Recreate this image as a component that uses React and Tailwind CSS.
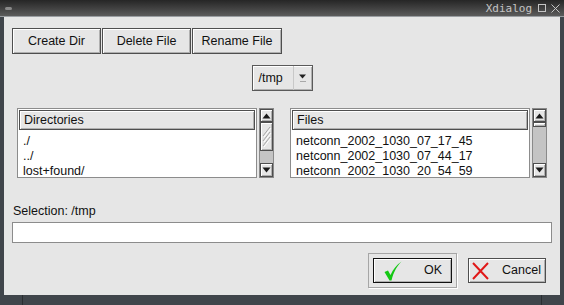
import React from "react";

const raised =
  "border border-[#4e4e4e] bg-[#e6e6e6] shadow-[inset_1px_1px_0_#ffffff,inset_-1px_-1px_0_#b0b0b0]";

function ArrowUp() {
  return (
    <svg width="9" height="6" viewBox="0 0 9 6">
      <path d="M4.5 0.5 L8.5 5.5 L0.5 5.5 Z" fill="#1a1a1a" />
    </svg>
  );
}
function ArrowDown() {
  return (
    <svg width="9" height="6" viewBox="0 0 9 6">
      <path d="M0.5 0.5 L8.5 0.5 L4.5 5.5 Z" fill="#1a1a1a" />
    </svg>
  );
}

function Scrollbar({ thumb, hatched }) {
  return (
    <div className="flex flex-col w-[15px] h-[70px] bg-[#c4c4c4] border border-[#8a8a8a]">
      <div className={`${raised} h-[13px] flex items-center justify-center`}>
        <ArrowUp />
      </div>
      <div
        className={`${raised} flex items-center justify-center overflow-hidden`}
        style={{ height: thumb }}
      >
        {hatched && (
          <svg width="11" height="26" viewBox="0 0 11 26">
            <path d="M9 3 L2 12 M9 8 L2 17 M9 13 L2 22" stroke="#a8a8a8" strokeWidth="1" />
            <path d="M10 4 L3 13 M10 9 L3 18 M10 14 L3 23" stroke="#ffffff" strokeWidth="1" />
          </svg>
        )}
      </div>
      <div className="flex-1" />
      <div className={`${raised} h-[14px] flex items-center justify-center`}>
        <ArrowDown />
      </div>
    </div>
  );
}

function ListBox({ title, items }) {
  return (
    <div className="w-[240px] h-[70px] bg-white border border-[#8c8c8c] overflow-hidden p-[1px]">
      <div className={`${raised} h-[20px] flex items-center pl-[4px]`}>{title}</div>
      <div className="pt-[4px] pl-[4px]">
        {items.map((t) => (
          <div key={t} className="h-[15px] leading-[15px] whitespace-nowrap">
            {t}
          </div>
        ))}
      </div>
    </div>
  );
}

export default function App() {
  return (
    <div
      className="w-[564px] h-[305px] bg-[#40454b] flex flex-col text-[12.5px] text-[#111]"
      style={{ fontFamily: '"Liberation Sans", Arial, sans-serif' }}
    >
      {/* title bar */}
      <div className="h-[16px] bg-gradient-to-b from-[#262626] to-[#5c5c5c] flex items-center relative">
        <div className="ml-[5px] w-[7px] h-[3px] rounded-sm bg-[#8a8a8a]" />
        <div className="flex-1" />
        <span
          className="text-[11px] text-[#c4c4c4] leading-none"
          style={{ fontFamily: '"DejaVu Sans Mono", monospace' }}
        >
          Xdialog
        </span>
        <div className="ml-[6px] w-[8px] h-[8px] border border-[#c4c4c4]" />
        <svg className="ml-[5px] mr-[4px]" width="9" height="9" viewBox="0 0 9 9">
          <path d="M0.5 0.5 L8.5 8.5 M8.5 0.5 L0.5 8.5" stroke="#c4c4c4" strokeWidth="1" />
        </svg>
      </div>
      <div className="h-[1px] bg-[#9a9ea2]" />

      {/* content */}
      <div className="mx-[4px] h-[278px] bg-[#e6e6e6] flex flex-col">
        {/* top buttons */}
        <div className="flex pt-[11px] pl-[8px] gap-[1px]">
          <div className={`${raised} w-[89px] h-[26px] flex items-center justify-center`}>Create Dir</div>
          <div className={`${raised} w-[89px] h-[26px] flex items-center justify-center`}>Delete File</div>
          <div className={`${raised} w-[90px] h-[26px] flex items-center justify-center`}>Rename File</div>
        </div>

        {/* dropdown */}
        <div className="flex justify-center mt-[11px]">
          <div className="flex h-[26px] border border-[#5a5a5a] bg-[#e6e6e6] shadow-[inset_1px_1px_0_#ffffff,inset_-1px_-1px_0_#b0b0b0]">
            <div className="w-[41px] flex items-center pl-[6px] border-r border-[#c8c8c8]">/tmp</div>
            <div className="w-[18px] flex flex-col items-center justify-center gap-[2px]">
              <svg width="7" height="5" viewBox="0 0 7 5">
                <path d="M0 0.5 L7 0.5 L3.5 4.5 Z" fill="#222" />
              </svg>
              <div className="w-[6px] h-[1px] bg-[#a8a8a8]" />
            </div>
          </div>
        </div>

        {/* lists */}
        <div className="flex mt-[17px] pl-[13px]">
          <ListBox title="Directories" items={["./", "../", "lost+found/"]} />
          <div className="ml-[2px]">
            <Scrollbar thumb={29} hatched />
          </div>
          <div className="ml-[16px]">
            <ListBox
              title="Files"
              items={[
                "netconn_2002_1030_07_17_45",
                "netconn_2002_1030_07_44_17",
                "netconn_2002_1030_20_54_59",
              ]}
            />
          </div>
          <div className="ml-[2px]">
            <Scrollbar thumb={5} />
          </div>
        </div>

        {/* selection */}
        <div className="mt-[26px] pl-[9px] h-[14px] leading-[14px]">Selection: /tmp</div>
        <div className="mt-[4px] mx-[8px] h-[21px] bg-white border border-[#8c8c8c]" />

        {/* bottom buttons */}
        <div className="flex justify-end items-start mt-[10px] pr-[14px]">
          <div className="p-[4px] border border-[#a6a6a6] shadow-[1px_1px_0_#ffffff]">
            <div className="w-[79px] h-[25px] border border-[#111] bg-[#e6e6e6] shadow-[inset_1px_1px_0_#ffffff,inset_-1px_-1px_0_#b0b0b0] flex items-center">
              <svg className="ml-[10px]" width="18" height="20" viewBox="0 0 18 20">
                <path
                  d="M0.5 11 L4 9.5 L6.5 14 C9 8.5 12.5 4 17.5 0.5 C13 5 9.5 11 7.5 19.5 L5.5 19.5 Z"
                  fill="#14c814"
                />
              </svg>
              <span className="ml-[22px]">OK</span>
            </div>
          </div>
          <div className={`${raised} ml-[11px] mt-[5px] w-[78px] h-[25px] flex items-center`}>
            <svg className="ml-[3px]" width="17" height="18" viewBox="0 0 17 18">
              <path d="M1 1 L16 17 M16 1 L1 17" stroke="#e01818" strokeWidth="2" />
            </svg>
            <span className="ml-[13px]">Cancel</span>
          </div>
        </div>
      </div>

      {/* bottom frame */}
      <div className="flex-1 flex">
        <div className="w-[22px]" />
        <div className="w-[1px] bg-[#2a2e32]" />
        <div className="flex-1" />
        <div className="w-[1px] bg-[#2a2e32]" />
        <div className="w-[22px]" />
      </div>
    </div>
  );
}
